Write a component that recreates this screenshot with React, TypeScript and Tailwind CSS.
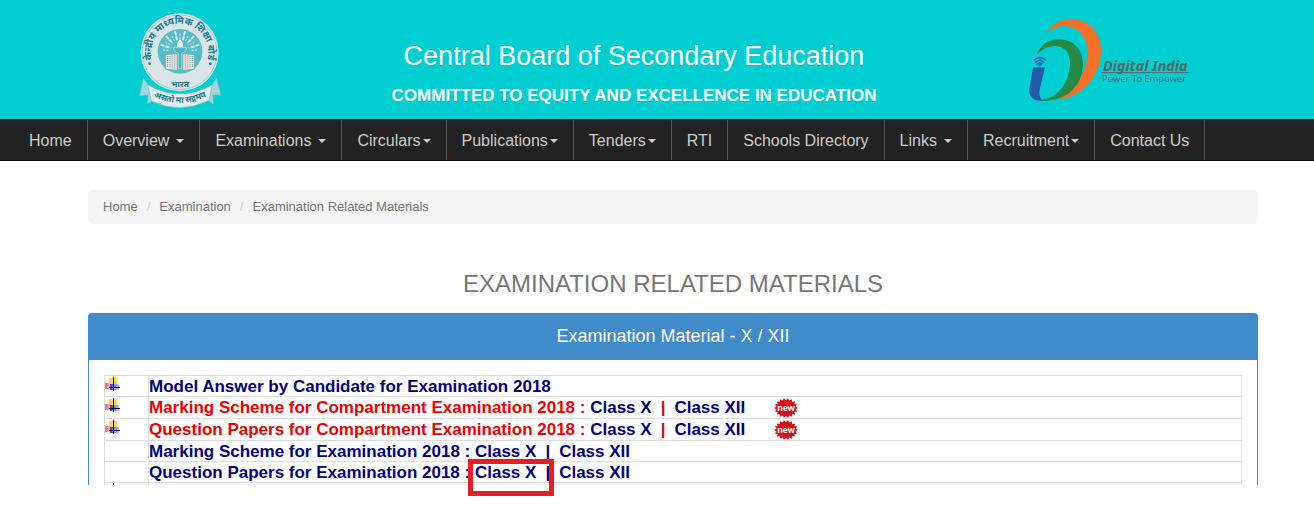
import type { ReactNode } from 'react'

const navItems = [
  { label: 'Home' },
  { label: 'Overview', caret: 'spaced' },
  { label: 'Examinations', caret: 'spaced' },
  { label: 'Circulars', caret: 'tight' },
  { label: 'Publications', caret: 'tight' },
  { label: 'Tenders', caret: 'tight' },
  { label: 'RTI' },
  { label: 'Schools Directory' },
  { label: 'Links', caret: 'spaced' },
  { label: 'Recruitment', caret: 'tight' },
  { label: 'Contact Us' },
]

const rows = [
  { title: 'Model Answer by Candidate for Examination 2018', bullet: true, single: true },
  { title: 'Marking Scheme for Compartment Examination 2018 :', bullet: true, fresh: true },
  { title: 'Question Papers for Compartment Examination 2018 :', bullet: true, fresh: true },
  { title: 'Marking Scheme for Examination 2018 :' },
  { title: 'Question Papers for Examination 2018 :', marked: true },
]

function Emblem() {
  const rays = Array.from({ length: 13 }, (_, i) => Math.PI * (1.02 + (i * 0.96) / 12))
  return (
    <svg viewBox="0 0 300 330" className="w-[100px] h-[110px] shrink-0" role="img" aria-label="CBSE emblem">
      <circle cx="149" cy="142" r="117" fill="#d9e6e9" />
      <circle cx="149" cy="142" r="112" fill="none" stroke="#8fbfc8" strokeWidth="2" />
      <circle cx="150" cy="139" r="67" fill="#55bcc8" />
      <g stroke="#d9e6e9" strokeLinecap="round">
        {rays.map((a, i) => (
          <line
            key={i}
            x1={150 + 36 * Math.cos(a)}
            y1={138 + 36 * Math.sin(a)}
            x2={150 + (i % 2 ? 59 : 52) * Math.cos(a)}
            y2={138 + (i % 2 ? 59 : 52) * Math.sin(a)}
            strokeWidth={i % 2 ? 6 : 3}
            strokeDasharray={i % 2 ? '8 7' : '4 6'}
          />
        ))}
      </g>
      <path d="M150 103c9 9 11 16 8 23h-16c-3-8 0-14 8-23z" fill="#eef3f5" />
      <path d="M130 128h40c-2 10-8 15-15 17v46h-10v-46c-7-2-13-7-15-17z" fill="#46b3c2" stroke="#d9e6e9" strokeWidth="2" />
      <path d="M106 149l36-3v50l-36-3zM194 149l-36-3v50l36-3z" fill="#eadfd9" stroke="#5aa9b5" strokeWidth="2" />
      <path d="M113 153v36M120 153v36M127 152v38M134 151v40M166 151v40M173 152v38M180 153v36M187 153v36" stroke="#79a9b2" strokeWidth="3" strokeDasharray="3 3" />
      <path d="M40 219l-12 54 26-3-2 28 30-20M260 219l13 52-25-1 3 27-32-18" fill="#9fd5dc" stroke="#70b5c1" strokeWidth="2" />
      <path d="M53 239Q149 294 247 239L237 286Q149 329 64 288Z" fill="#e3edef" stroke="#75b3be" strokeWidth="2" />
      <path id="emblem-ring" d="M74 184A86 86 0 1 1 224 184" fill="none" />
      <path id="emblem-ribbon" d="M62 271Q149 316 238 270" fill="none" />
      <g fill="#24788c" fontFamily="'Noto Sans Devanagari', 'Noto Sans', sans-serif" fontWeight="700">
        <text fontSize="29">
          <textPath href="#emblem-ring" startOffset="50%" textAnchor="middle">केन्द्रीय माध्यमिक शिक्षा बोर्ड</textPath>
        </text>
        <text x="150" y="246" fontSize="25" textAnchor="middle">भारत</text>
        <text fontSize="25">
          <textPath href="#emblem-ribbon" startOffset="50%" textAnchor="middle">असतो मा सद्गमय</textPath>
        </text>
      </g>
      <circle cx="59" cy="176" r="4" fill="#24788c" />
      <circle cx="241" cy="176" r="4" fill="#24788c" />
    </svg>
  )
}

function DigitalIndia() {
  return (
    <svg viewBox="0 0 540 300" className="w-[180px] h-[100px] shrink-0" role="img" aria-label="Digital India, Power To Empower">
      <path d="M78 73C95 42 124 26 157 27C208 29 243 70 243 120C243 190 195 258 115 270C161 245 199 194 202 132C204 78 174 48 130 48C110 49 93 58 78 73Z" fill="#f56f27" />
      <path d="M51 133C61 104 88 88 118 88C162 89 190 120 189 164C187 226 142 273 68 273L59 269C116 267 146 216 150 164C152 127 133 108 103 108C83 109 65 119 51 133Z" fill="#258a46" />
      <path d="M39 172H75L60 234C56 250 59 263 69 272C42 274 24 260 28 236Z" fill="#2459a9" />
      <g fill="none" stroke="#1767a9" strokeWidth="5" strokeLinecap="round">
        <path d="M43 149Q59 137 75 149" />
        <path d="M47 156Q59 147 70 156" />
        <path d="M52 162Q59 157 65 162" />
      </g>
      <circle cx="59" cy="165" r="4" fill="#1767a9" />
      <text x="249" y="182" fontSize="43" fontWeight="700" fontStyle="italic" fontFamily="'Noto Sans', sans-serif" fill="#53686b">Digital India</text>
      <path d="M244 188H506" stroke="#53686b" strokeWidth="3" />
      <text x="246" y="216" fontSize="28" fontFamily="'Noto Sans', sans-serif" fill="#4b7377">Power To Empower</text>
    </svg>
  )
}

function Bullet() {
  return (
    <svg viewBox="0 0 15 14" className="mt-px w-[15px] h-[14px]" aria-hidden="true">
      <defs>
        <linearGradient id="bullet-red">
          <stop offset="0" stopColor="#ff5b6b" />
          <stop offset="1" stopColor="#ffd5d8" />
        </linearGradient>
        <linearGradient id="bullet-blue">
          <stop offset="0" stopColor="#3434c8" />
          <stop offset="1" stopColor="#c9c9f4" />
        </linearGradient>
      </defs>
      <path d="M4 1h8v6H4z" fill="#ffd34d" />
      <path d="M0 6h7v6H0z" fill="url(#bullet-red)" />
      <path d="M5 7h9v6H5z" fill="url(#bullet-blue)" />
      <path d="M8 0h1v14H8zM4 10h11v1H4z" fill="#000033" />
    </svg>
  )
}

function NewBadge() {
  const points = Array.from({ length: 36 }, (_, i) => {
    const a = (i * Math.PI) / 18
    const k = i % 2 ? 0.8 : 1
    return `${(12 + 12 * k * Math.cos(a)).toFixed(1)},${(10 + 10 * k * Math.sin(a)).toFixed(1)}`
  }).join(' ')
  return (
    <svg viewBox="0 0 24 20" className="inline-block align-top w-6 h-5 -my-px ml-[29px]" role="img" aria-label="new">
      <polygon points={points} fill="#d6101b" />
      <text x="12" y="13" fontSize="9" fontWeight="700" textAnchor="middle" fontFamily="'Liberation Sans', sans-serif" fill="#fff">new</text>
    </svg>
  )
}

function DocLink({ children }: { children: ReactNode }) {
  return <a href="#" className="text-[#000080]">{children}</a>
}

export default function App() {
  return (
    <div className="min-h-screen bg-white font-['Liberation_Sans',Arial,sans-serif] text-[#777]">
      <header className="bg-[#00ced1] h-[119px] flex items-start pl-[130px] pr-[114px] pt-[5px]">
        <Emblem />
        <div className="grow pl-[18px] pt-[34px] text-center text-white whitespace-nowrap">
          <h1 className="text-[27px] leading-[34px]">Central Board of Secondary Education</h1>
          <p className="mt-[13px] text-[17px] leading-5 font-bold">COMMITTED TO EQUITY AND EXCELLENCE IN EDUCATION</p>
        </div>
        <div className="pt-[5px]">
          <DigitalIndia />
        </div>
      </header>

      <nav className="bg-[#222] border-y border-[#090909] pl-[14px]">
        <ul className="flex">
          {navItems.map((item) => (
            <li key={item.label} className="border-r border-[#555]">
              <a href="#" className="flex items-center h-10 px-[15px] pt-0.5 text-base text-[#ccc] whitespace-nowrap">
                {item.label}
                {item.caret && (
                  <span
                    className={
                      item.caret === 'spaced'
                        ? 'ml-[7px] border-x-4 border-t-4 border-x-transparent border-t-[#ccc]'
                        : 'ml-0.5 border-x-4 border-t-4 border-x-transparent border-t-[#ccc]'
                    }
                  />
                )}
              </a>
            </li>
          ))}
        </ul>
      </nav>

      <main className="pl-[88px] pr-14 pt-[29px] pb-[27px]">
        <ol className="flex bg-[#f5f5f5] rounded px-[15px] py-2 text-[13px] leading-[18px]">
          <li><a href="#">Home</a></li>
          <li className="before:content-['/'] before:px-[9px] before:text-[#ccc]"><a href="#">Examination</a></li>
          <li className="before:content-['/'] before:px-[9px] before:text-[#ccc]">Examination Related Materials</li>
        </ol>

        <h2 className="mt-[46px] text-2xl leading-7 text-center">EXAMINATION RELATED MATERIALS</h2>

        <section className="mt-[15px] border border-b-0 border-[#428bca] rounded-t">
          <h3 className="bg-[#428bca] text-white text-lg leading-[44px] pb-0.5 text-center">Examination Material - X / XII</h3>
          <div className="px-[15px] pt-[15px]">
            <table className="w-full table-fixed border-collapse text-[17px] leading-[18px] font-bold text-[#000080]">
              <colgroup>
                <col className="w-11" />
                <col />
              </colgroup>
              <tbody>
                {rows.map((row) => (
                  <tr key={row.title} className={row.fresh ? 'h-[22px]' : 'h-[21px]'}>
                    <td className="border border-[#ddd] p-0 align-top">{row.bullet && <Bullet />}</td>
                    <td className="border border-[#ddd] p-0 pt-0.5 align-top whitespace-nowrap">
                      {row.single ? (
                        <DocLink>{row.title}</DocLink>
                      ) : (
                        <div className={row.fresh ? 'text-[#f00000]' : undefined}>
                          {row.title}{' '}
                          <span className="relative">
                            <DocLink>Class X</DocLink>
                            {row.marked && <span className="absolute -left-[7px] -top-1 w-[86px] h-[37px] border-5 border-[#ec1c24]" />}
                          </span>
                          <span className="px-[9px]">|</span>
                          <DocLink>Class XII</DocLink>
                          {row.fresh && <NewBadge />}
                        </div>
                      )}
                    </td>
                  </tr>
                ))}
                <tr className="bg-[#f5f5f5]">
                  <td className="border border-b-0 border-[#ddd] p-0">
                    <div className="ml-2 w-px h-0.5 bg-[#000033]" />
                  </td>
                  <td className="border border-b-0 border-[#ddd] p-0" />
                </tr>
              </tbody>
            </table>
          </div>
        </section>
      </main>
    </div>
  )
}
